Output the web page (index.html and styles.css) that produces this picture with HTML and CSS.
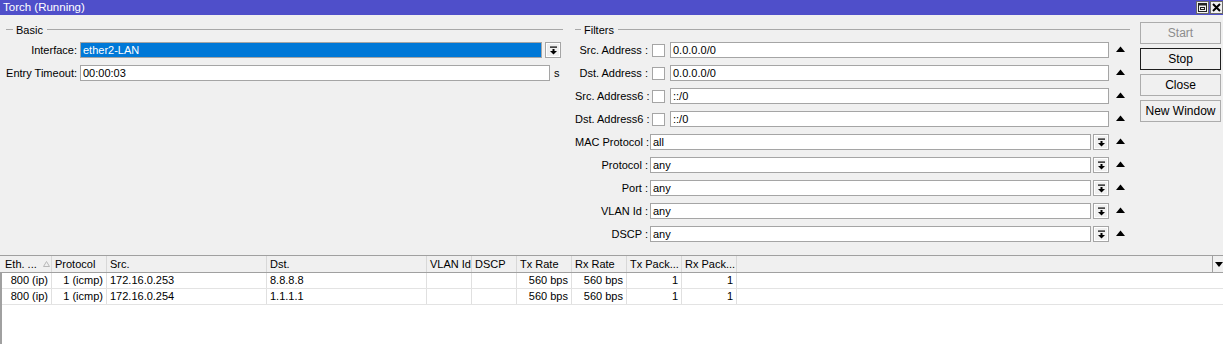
FILE: index.html
```html
<!DOCTYPE html>
<html lang="en">
<head>
  <meta charset="UTF-8">
  <title>Torch (Running)</title>
  <link rel="stylesheet" href="styles.css">
</head>
<body>
  <div class="titlebar">
    <span class="title">Torch (Running)</span>
    <div class="win-btns">
      <span class="win-btn">
        <svg width="11" height="11" viewBox="0 0 11 11"><rect x="1.5" y="1.5" width="8" height="8" fill="none" stroke="#222"/><line x1="1.5" y1="2.5" x2="9.5" y2="2.5" stroke="#222" stroke-width="2"/><rect x="3.5" y="5.5" width="4" height="2" fill="none" stroke="#222"/></svg>
      </span>
      <span class="win-btn">
        <svg width="11" height="11" viewBox="0 0 11 11"><path d="M2 2 L9 9 M9 2 L2 9" stroke="#000" stroke-width="2"/></svg>
      </span>
    </div>
  </div>

  <div class="main">
    <div class="group basic">
      <div class="group-head"><span class="gl-short"></span><span class="gl-text">Basic</span><span class="gl-long"></span></div>
      <div class="row">
        <label class="lbl-basic">Interface:</label>
        <div class="input sel iface">ether2-LAN</div>
        <span class="dd-btn"><svg width="9" height="9" viewBox="0 0 9 9"><rect x="1" y="0.5" width="7" height="1.2" fill="#000"/><rect x="3.5" y="3" width="2" height="2" fill="#000"/><polygon points="1,5 8,5 4.5,8.5" fill="#000"/></svg></span>
      </div>
      <div class="row">
        <label class="lbl-basic">Entry Timeout:</label>
        <div class="input timeout">00:00:03</div>
        <span class="unit">s</span>
      </div>
    </div>

    <div class="group filters">
      <div class="group-head"><span class="gl-short"></span><span class="gl-text">Filters</span><span class="gl-long"></span></div>
      <div class="frow">
        <label class="lbl-f">Src. Address :</label>
        <span class="chk"></span>
        <div class="input addr">0.0.0.0/0</div>
        <span class="up"><svg width="9" height="6" viewBox="0 0 9 6"><polygon points="0,6 9,6 4.5,0.5" fill="#000"/></svg></span>
      </div>
      <div class="frow">
        <label class="lbl-f">Dst. Address :</label>
        <span class="chk"></span>
        <div class="input addr">0.0.0.0/0</div>
        <span class="up"><svg width="9" height="6" viewBox="0 0 9 6"><polygon points="0,6 9,6 4.5,0.5" fill="#000"/></svg></span>
      </div>
      <div class="frow">
        <label class="lbl-f">Src. Address6 :</label>
        <span class="chk"></span>
        <div class="input addr">::/0</div>
        <span class="up"><svg width="9" height="6" viewBox="0 0 9 6"><polygon points="0,6 9,6 4.5,0.5" fill="#000"/></svg></span>
      </div>
      <div class="frow">
        <label class="lbl-f">Dst. Address6 :</label>
        <span class="chk"></span>
        <div class="input addr">::/0</div>
        <span class="up"><svg width="9" height="6" viewBox="0 0 9 6"><polygon points="0,6 9,6 4.5,0.5" fill="#000"/></svg></span>
      </div>
      <div class="frow">
        <label class="lbl-f">MAC Protocol :</label>
        <div class="input combo">all</div>
        <span class="dd-btn"><svg width="9" height="9" viewBox="0 0 9 9"><rect x="1" y="0.5" width="7" height="1.2" fill="#000"/><rect x="3.5" y="3" width="2" height="2" fill="#000"/><polygon points="1,5 8,5 4.5,8.5" fill="#000"/></svg></span>
        <span class="up"><svg width="9" height="6" viewBox="0 0 9 6"><polygon points="0,6 9,6 4.5,0.5" fill="#000"/></svg></span>
      </div>
      <div class="frow">
        <label class="lbl-f">Protocol :</label>
        <div class="input combo">any</div>
        <span class="dd-btn"><svg width="9" height="9" viewBox="0 0 9 9"><rect x="1" y="0.5" width="7" height="1.2" fill="#000"/><rect x="3.5" y="3" width="2" height="2" fill="#000"/><polygon points="1,5 8,5 4.5,8.5" fill="#000"/></svg></span>
        <span class="up"><svg width="9" height="6" viewBox="0 0 9 6"><polygon points="0,6 9,6 4.5,0.5" fill="#000"/></svg></span>
      </div>
      <div class="frow">
        <label class="lbl-f">Port :</label>
        <div class="input combo">any</div>
        <span class="dd-btn"><svg width="9" height="9" viewBox="0 0 9 9"><rect x="1" y="0.5" width="7" height="1.2" fill="#000"/><rect x="3.5" y="3" width="2" height="2" fill="#000"/><polygon points="1,5 8,5 4.5,8.5" fill="#000"/></svg></span>
        <span class="up"><svg width="9" height="6" viewBox="0 0 9 6"><polygon points="0,6 9,6 4.5,0.5" fill="#000"/></svg></span>
      </div>
      <div class="frow">
        <label class="lbl-f">VLAN Id :</label>
        <div class="input combo">any</div>
        <span class="dd-btn"><svg width="9" height="9" viewBox="0 0 9 9"><rect x="1" y="0.5" width="7" height="1.2" fill="#000"/><rect x="3.5" y="3" width="2" height="2" fill="#000"/><polygon points="1,5 8,5 4.5,8.5" fill="#000"/></svg></span>
        <span class="up"><svg width="9" height="6" viewBox="0 0 9 6"><polygon points="0,6 9,6 4.5,0.5" fill="#000"/></svg></span>
      </div>
      <div class="frow">
        <label class="lbl-f">DSCP :</label>
        <div class="input combo">any</div>
        <span class="dd-btn"><svg width="9" height="9" viewBox="0 0 9 9"><rect x="1" y="0.5" width="7" height="1.2" fill="#000"/><rect x="3.5" y="3" width="2" height="2" fill="#000"/><polygon points="1,5 8,5 4.5,8.5" fill="#000"/></svg></span>
        <span class="up"><svg width="9" height="6" viewBox="0 0 9 6"><polygon points="0,6 9,6 4.5,0.5" fill="#000"/></svg></span>
      </div>
    </div>

    <div class="actions">
      <button class="btn disabled">Start</button>
      <button class="btn default">Stop</button>
      <button class="btn">Close</button>
      <button class="btn">New Window</button>
    </div>
  </div>

  <div class="table">
    <div class="trow thead">
      <div class="th">Eth. ... <svg class="sort" width="7" height="6" viewBox="0 0 7 6"><polygon points="0.5,5.5 6.5,5.5 3.5,0.5" fill="none" stroke="#b8b8b8"/></svg></div>
      <div class="th">Protocol</div>
      <div class="th">Src.</div>
      <div class="th">Dst.</div>
      <div class="th">VLAN Id</div>
      <div class="th">DSCP</div>
      <div class="th">Tx Rate</div>
      <div class="th">Rx Rate</div>
      <div class="th">Tx Pack...</div>
      <div class="th">Rx Pack...</div>
      <div class="th"></div>
      <div class="th menu"><svg width="8" height="5" viewBox="0 0 8 5"><polygon points="0,0 8,0 4,5" fill="#000"/></svg></div>
    </div>
    <div class="trow">
      <div class="td r">800 (ip)</div>
      <div class="td r">1 (icmp)</div>
      <div class="td">172.16.0.253</div>
      <div class="td">8.8.8.8</div>
      <div class="td"></div>
      <div class="td"></div>
      <div class="td r">560 bps</div>
      <div class="td r">560 bps</div>
      <div class="td r">1</div>
      <div class="td r">1</div>
      <div class="td fill"></div>
    </div>
    <div class="trow">
      <div class="td r">800 (ip)</div>
      <div class="td r">1 (icmp)</div>
      <div class="td">172.16.0.254</div>
      <div class="td">1.1.1.1</div>
      <div class="td"></div>
      <div class="td"></div>
      <div class="td r">560 bps</div>
      <div class="td r">560 bps</div>
      <div class="td r">1</div>
      <div class="td r">1</div>
      <div class="td fill"></div>
    </div>
  </div>
</body>
</html>
```

FILE: styles.css
```css
html, body {
  margin: 0;
  padding: 0;
  height: 100%;
  background: #f0f0f0;
  font-family: 'Liberation Sans', Arial, sans-serif;
  font-size: 11px;
  color: #000;
  overflow: hidden;
}

/* Window title */
.titlebar {
  height: 15px;
  background: #4f4fca;
  display: flex;
  align-items: center;
  justify-content: space-between;
}

.title {
  color: #fff;
  font-size: 11.5px;
  padding-left: 3px;
  line-height: 15px;
}

.win-btns {
  display: flex;
  gap: 1px;
  align-self: flex-start;
  padding-top: 1px;
}

.win-btn {
  box-sizing: border-box;
  width: 13px;
  height: 13px;
  background: #f0f0f0;
  border: 1px solid #6a6a6a;
  display: flex;
  align-items: center;
  justify-content: center;
}

/* Top area */
.main {
  display: flex;
  height: 240px;
}

.group-head {
  display: flex;
  align-items: center;
  height: 15px;
  margin-top: 7px;
}

.gl-short, .gl-long {
  height: 1px;
  background: #a8a8a8;
}

.gl-short { width: 7px; }
.gl-long { flex: 1; }

.gl-text {
  padding: 0 4px 0 3px;
}

.basic {
  width: 558px;
  margin-left: 5px;
}

.basic .gl-short { margin-left: 1px; }

.row {
  display: flex;
  align-items: center;
  height: 16px;
  margin-top: 5px;
}

.row + .row { margin-top: 7px; }

.lbl-basic {
  width: 72px;
  text-align: right;
  margin-right: 3px;
}

.input {
  box-sizing: border-box;
  height: 16px;
  line-height: 14px;
  border: 1px solid #a5a5a5;
  background: #fff;
  padding-left: 2px;
  white-space: nowrap;
}

.input.sel {
  background: #0078d7;
  color: #fff;
}

.iface { width: 462px; }
.timeout { width: 470px; }

.unit { margin-left: 4px; }

.dd-btn {
  box-sizing: border-box;
  width: 16px;
  height: 16px;
  margin-left: 3px;
  border: 1px solid #a5a5a5;
  background: #f0f0f0;
  box-shadow: inset 0 0 0 1px #fff;
  display: flex;
  align-items: center;
  justify-content: center;
}

.filters {
  width: 555px;
  margin-left: 12px;
}

.filters .gl-short { width: 6px; }

.frow {
  display: flex;
  align-items: center;
  height: 16px;
  margin-top: 5px;
}

.frow + .frow { margin-top: 7px; }

.lbl-f {
  width: 73px;
  text-align: right;
  white-space: nowrap;
}

.chk {
  box-sizing: border-box;
  width: 13px;
  height: 13px;
  margin-left: 4px;
  border: 1px solid #a5a5a5;
  background: #fff;
}

.addr {
  width: 439px;
  margin-left: 5px;
}

.combo {
  width: 441px;
  margin-left: 2px;
}

.frow .dd-btn { margin-left: 2px; }

.up {
  display: flex;
  margin-left: 7px;
  margin-top: -2px;
}

.actions {
  display: flex;
  flex-direction: column;
  gap: 4px;
  margin-left: 10px;
  padding-top: 7px;
}

.btn {
  box-sizing: border-box;
  width: 81px;
  height: 22px;
  font: inherit;
  font-size: 12px;
  background: #f0f0f0;
  border: 1px solid #acacac;
  padding: 0;
}

.btn.disabled { color: #8c8c8c; }
.btn.default { border-color: #1e1e1e; }

/* Results table */
.table {
  height: 89px;
  border-left: 2px solid #a0a0a0;
  background: #fff;
}

.trow {
  display: grid;
  grid-template-columns: 50px 55px 160px 160px 45px 45px 55px 55px 55px 55px 1fr 10px;
  height: 15px;
  border-bottom: 1px solid #e3e3e3;
}

.thead {
  box-sizing: border-box;
  height: 18px;
  background: #f0f0f0;
  border-top: 1px solid #a0a0a0;
  border-bottom: 1px solid #a0a0a0;
  margin-left: -2px;
  padding-left: 2px;
}

.th, .td {
  box-sizing: border-box;
  border-right: 1px solid #e0e0e0;
  padding: 0 3px;
  line-height: 15px;
  white-space: nowrap;
  overflow: hidden;
}

.th {
  line-height: 16px;
  border-right-color: #d8d8d8;
}

.th:nth-child(11) { border-right-color: #a0a0a0; }

.th.menu {
  border-right: none;
  padding: 0 0 0 2px;
  display: flex;
  align-items: center;
}

.sort { margin-left: 3px; vertical-align: 1px; }

.td.r { text-align: right; }
.td.fill { border-right: none; }
```
